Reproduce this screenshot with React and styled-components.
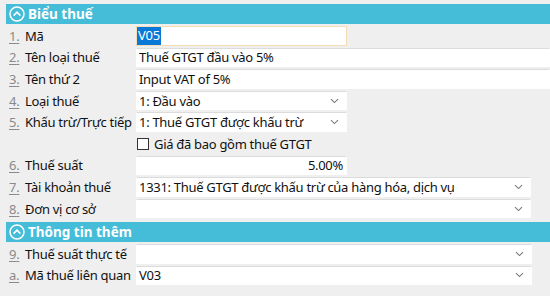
import React from 'react';
import styled, { createGlobalStyle } from 'styled-components';

const GlobalStyle = createGlobalStyle`
  html, body {
    margin: 0;
    padding: 0;
    background: #efefef;
    overflow: hidden;
  }
  body {
    font-family: "Noto Sans", "Open Sans", sans-serif;
    font-size: 13px;
    letter-spacing: -0.3px;
    color: #111;
  }
`;

const Page = styled.div`
  width: 550px;
  height: 296px;
  padding-top: 4px;
  box-sizing: border-box;
  display: flex;
  flex-direction: column;
`;

const SectionBar = styled.div`
  margin-left: 6px;
  height: 20px;
  background: #45bcd8;
  display: flex;
  align-items: center;
  gap: 3px;
  padding-left: 3px;
  color: #fff;
  font-weight: 700;
  font-size: 13.5px;
  letter-spacing: 0;
  margin-top: ${(p) => p.$top || 0}px;
  margin-bottom: 2px;
`;

const Rows = styled.div`
  display: flex;
  flex-direction: column;
  gap: 2px;
`;

const Row = styled.div`
  height: 19.6px;
  display: grid;
  grid-template-columns: 136px 1fr;
  align-items: center;
`;

const Label = styled.div`
  display: flex;
  align-items: center;
  padding-left: 9px;
  white-space: nowrap;
`;

const Num = styled.span`
  color: #8a8a8a;
  text-decoration: underline;
  text-underline-offset: 2px;
  width: 16px;
`;

const Field = styled.div`
  width: ${(p) => p.$w || '100%'};
  height: 19.6px;
  box-sizing: border-box;
  background: #fff;
  border: 1px solid ${(p) => (p.$focus ? '#f3dcb6' : '#fff')};
  border-top-color: ${(p) => (p.$focus ? '#f3dcb6' : '#dcdcdc')};
  display: flex;
  align-items: center;
  justify-content: ${(p) => (p.$right ? 'flex-end' : 'space-between')};
  padding: 0 ${(p) => (p.$right ? '3px' : '0')} 0 ${(p) => (p.$focus ? '0' : '2px')};
  white-space: nowrap;
  overflow: hidden;
`;

const Selected = styled.span`
  background: #0a78d7;
  color: #fff;
  padding: 0 1px;
  line-height: 17.6px;
`;

const Caret = styled.svg`
  width: 9px;
  height: 6px;
  margin-right: 7px;
  flex: none;
`;

const Check = styled.label`
  display: flex;
  align-items: center;
  gap: 5px;
`;

const Box = styled.span`
  width: 12px;
  height: 12px;
  box-sizing: border-box;
  border: 1px solid #333;
  background: #fff;
  margin-left: 1px;
`;

const Chevron = () => (
  <Caret viewBox="0 0 9 6">
    <path d="M1 1.2 L4.5 4.6 L8 1.2" fill="none" stroke="#7a7a7a" strokeWidth="1.1" />
  </Caret>
);

const CircleUp = () => (
  <svg width="16" height="16" viewBox="0 0 16 16">
    <circle cx="8" cy="8" r="7" fill="none" stroke="#fff" strokeWidth="1.5" />
    <path d="M4.6 9.6 L8 6.2 L11.4 9.6" fill="none" stroke="#fff" strokeWidth="1.6" />
  </svg>
);

const FieldRow = ({ n, label, children }) => (
  <Row>
    <Label>
      <Num>{n}.</Num>
      {label}
    </Label>
    {children}
  </Row>
);

const Select = ({ w, children }) => (
  <Field $w={w}>
    <span>{children}</span>
    <Chevron />
  </Field>
);

export default function App() {
  return (
    <Page>
      <GlobalStyle />
      <SectionBar>
        <CircleUp />
        Biểu thuế
      </SectionBar>
      <Rows>
        <FieldRow n="1" label="Mã">
          <Field $w="211px" $focus>
            <Selected>V05</Selected>
          </Field>
        </FieldRow>
        <FieldRow n="2" label="Tên loại thuế">
          <Field>Thuế GTGT đầu vào 5%</Field>
        </FieldRow>
        <FieldRow n="3" label="Tên thứ 2">
          <Field>Input VAT of 5%</Field>
        </FieldRow>
        <FieldRow n="4" label="Loại thuế">
          <Select w="211px">1: Đầu vào</Select>
        </FieldRow>
        <FieldRow n="5" label="Khấu trừ/Trực tiếp">
          <Select w="211px">1: Thuế GTGT được khấu trừ</Select>
        </FieldRow>
        <Row>
          <span />
          <Check>
            <Box />
            Giá đã bao gồm thuế GTGT
          </Check>
        </Row>
        <FieldRow n="6" label="Thuế suất">
          <Field $w="211px" $right>5.00%</Field>
        </FieldRow>
        <FieldRow n="7" label="Tài khoản thuế">
          <Select w="395px">1331: Thuế GTGT được khấu trừ của hàng hóa, dịch vụ</Select>
        </FieldRow>
        <FieldRow n="8" label="Đơn vị cơ sở">
          <Select w="395px" />
        </FieldRow>
      </Rows>
      <SectionBar $top={3.6}>
        <CircleUp />
        Thông tin thêm
      </SectionBar>
      <Rows>
        <FieldRow n="9" label="Thuế suất thực tế">
          <Select w="396px" />
        </FieldRow>
        <FieldRow n="a" label="Mã thuế liên quan">
          <Select w="396px">V03</Select>
        </FieldRow>
      </Rows>
    </Page>
  );
}
